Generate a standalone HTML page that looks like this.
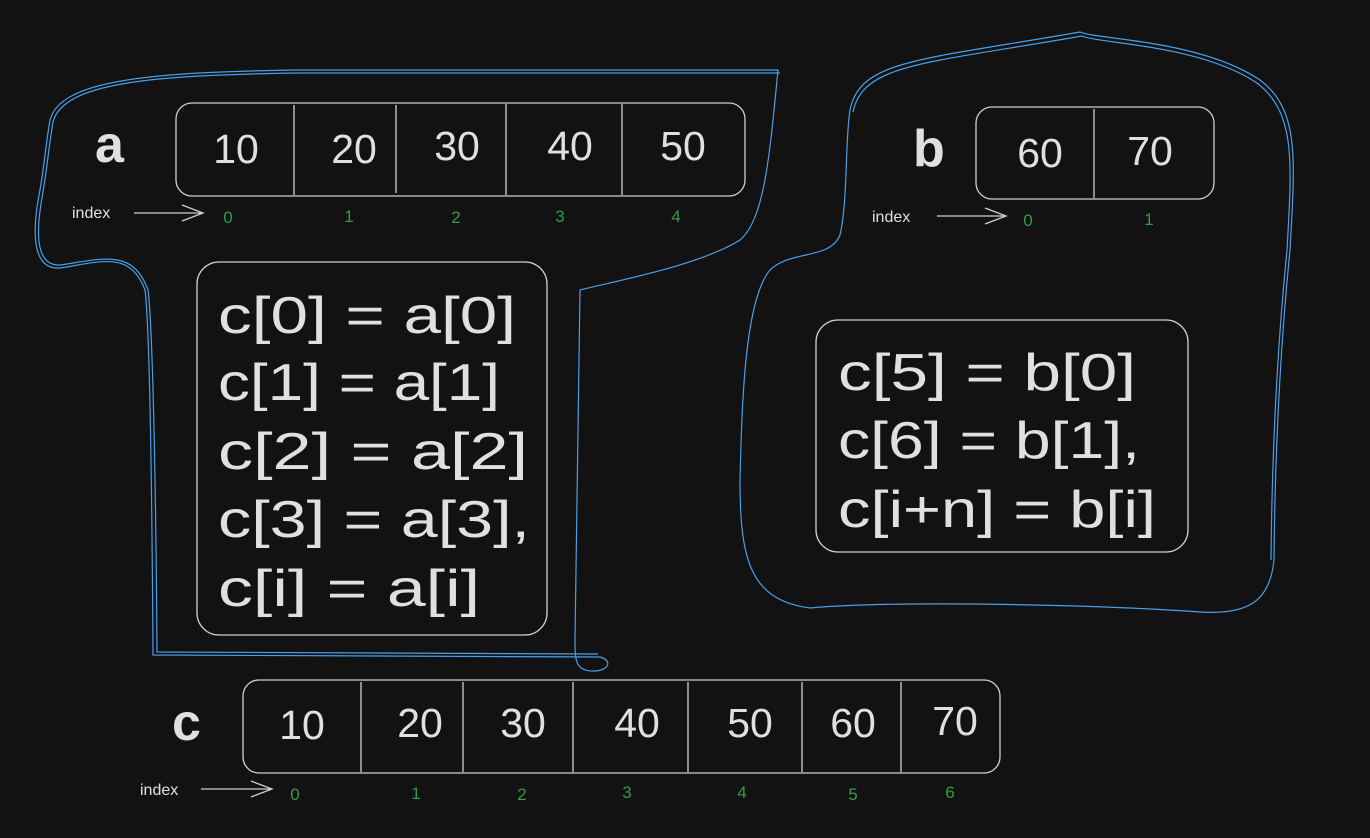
<!DOCTYPE html>
<html><head><meta charset="utf-8"><style>
html,body{margin:0;padding:0;background:#121212;}
svg{display:block}
text{font-family:"Liberation Sans",sans-serif;fill:#e0e0e0}
text.g{fill:#2f9e44;font-size:17px}
.ix{font-size:16px}
.n{font-size:41px}
.code{font-size:52px}
.big{font-size:52px;font-weight:bold}
</style></head><body>
<svg width="1370" height="838" viewBox="0 0 1370 838" xmlns="http://www.w3.org/2000/svg">
<rect width="1370" height="838" fill="#121212"/>
<g fill="none" stroke="#4a9fe6" stroke-width="1.2">
<path d="M778 70 L300 70 C150 72 60 80 50 120 C45 150 45 160 40 190 C30 240 35 270 60 268 C100 262 130 250 145 290 C150 330 152 500 153 655 L600 657 C612 660 610 670 595 671 C575 672 575 660 575 640 L580 290 C620 280 700 265 740 240 C765 220 770 150 778 70 Z"/>
<path d="M780 73 L300 73 C150 75 63 83 53 122 C48 152 48 162 43 192 C34 240 38 266 60 265 C102 259 133 248 148 290 C153 330 156 500 157 652 L598 654"/>
<path d="M850 110 C860 60 920 60 1080 32 C1100 40 1200 40 1260 80 C1300 110 1295 160 1290 250 C1280 350 1275 450 1274 560 C1270 600 1250 615 1200 612 C1100 605 900 600 810 608 C750 600 740 560 740 480 C742 400 745 300 770 270 C790 250 830 260 840 235 C848 200 845 140 850 110 Z"/>
<path d="M853 112 C863 64 922 64 1082 36 C1100 44 1198 44 1257 83 C1296 113 1292 162 1287 250 C1277 350 1272 450 1271 560"/>
</g>
<g fill="none" stroke="#d0d0d0" stroke-width="1.3">
<rect x="176" y="103" width="569" height="93" rx="16"/>
<path d="M294 105V195 M396 105V193 M506 104V195 M622 104V195"/>
<rect x="976" y="107" width="238" height="92" rx="16"/>
<path d="M1094 109V198"/>
<rect x="243" y="680" width="757" height="93" rx="16"/>
<path d="M361 682V772 M463 682V772 M573 682V772 M688 682V772 M802 682V772 M901 682V772"/>
<rect x="197" y="262" width="350" height="373" rx="22"/>
<rect x="816" y="320" width="372" height="232" rx="22"/>
<path d="M134 213H203 M182 205L203 213L182 221"/>
<path d="M937 216H1006 M985 208L1006 216L985 224"/>
<path d="M201 789H272 M251 781L272 789L251 797"/>
</g>
<text class="big" x="95" y="162">a</text>
<text class="big" x="913" y="166">b</text>
<text class="big" x="172" y="740">c</text>
<g class="n" text-anchor="middle">
<text x="236" y="163">10</text><text x="354" y="163">20</text><text x="457" y="160">30</text><text x="570" y="160">40</text><text x="683" y="160">50</text>
<text x="1040" y="167">60</text><text x="1150" y="165">70</text>
<text x="302" y="739">10</text><text x="420" y="737">20</text><text x="523" y="737">30</text><text x="637" y="737">40</text><text x="750" y="737">50</text><text x="853" y="737">60</text><text x="955" y="735">70</text>
</g>
<text class="ix" x="72" y="218">index</text>
<text class="ix" x="872" y="222">index</text>
<text class="ix" x="140" y="795">index</text>
<g text-anchor="middle">
<text class="g" x="228" y="223">0</text><text class="g" x="349" y="222">1</text><text class="g" x="456" y="223">2</text><text class="g" x="560" y="222">3</text><text class="g" x="676" y="222">4</text>
<text class="g" x="1028" y="226">0</text><text class="g" x="1149" y="225">1</text>
<text class="g" x="295" y="800">0</text><text class="g" x="416" y="799">1</text><text class="g" x="522" y="800">2</text><text class="g" x="627" y="798">3</text><text class="g" x="742" y="798">4</text><text class="g" x="853" y="800">5</text><text class="g" x="950" y="798">6</text>
</g>
<g class="code">
<text x="218" y="333" textLength="298" lengthAdjust="spacingAndGlyphs">c[0] = a[0]</text>
<text x="218" y="400" textLength="282" lengthAdjust="spacingAndGlyphs">c[1] = a[1]</text>
<text x="218" y="469" textLength="310" lengthAdjust="spacingAndGlyphs">c[2] = a[2]</text>
<text x="218" y="537" textLength="312" lengthAdjust="spacingAndGlyphs">c[3] = a[3],</text>
<text x="218" y="606" textLength="262" lengthAdjust="spacingAndGlyphs">c[i] = a[i]</text>
<text x="838" y="390" textLength="298" lengthAdjust="spacingAndGlyphs">c[5] = b[0]</text>
<text x="838" y="458" textLength="302" lengthAdjust="spacingAndGlyphs">c[6] = b[1],</text>
<text x="838" y="527" textLength="318" lengthAdjust="spacingAndGlyphs">c[i+n] = b[i]</text>
</g>
</svg>
</body></html>
